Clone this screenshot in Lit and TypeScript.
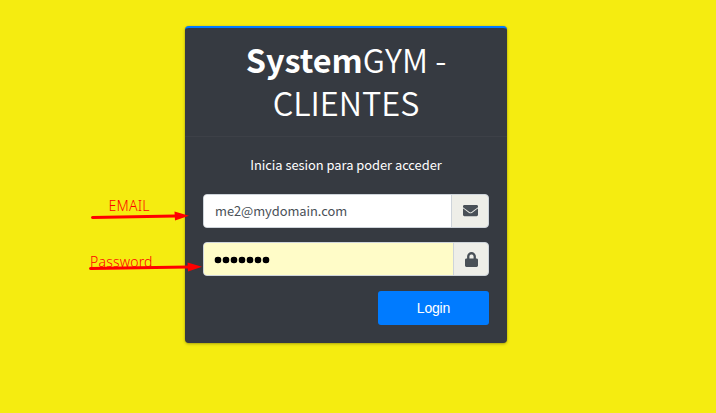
import { LitElement, html, css } from "lit";
import { customElement } from "lit/decorators.js";

@customElement("app-root")
export class AppRoot extends LitElement {
  static styles = css`
    :host {
      display: block;
      position: relative;
      box-sizing: border-box;
      width: 716px;
      height: 413px;
      padding: 26px 0 0 185px;
      overflow: hidden;
      background: #f5ec10;
      font-family: "Noto Sans CJK SC", "Noto Sans", sans-serif;
    }
    * { box-sizing: border-box; }
    .card {
      width: 322px;
      height: 317px;
      background: #363a41;
      border-top: 2px solid #007bff;
      border-radius: 4px;
      box-shadow: 0 0 1px rgba(0, 0, 0, 0.2), 0 1px 3px rgba(0, 0, 0, 0.3);
      color: #fff;
    }
    .header {
      height: 109px;
      padding-top: 9px;
      border-bottom: 1px solid #3d4047;
      text-align: center;
    }
    .title {
      margin: 0;
      font-size: 32.4px;
      line-height: 43px;
      font-weight: 350;
      white-space: nowrap;
    }
    .title b { font-weight: 700; }
    .line { display: block; }
    .body { padding: 17px 18px 0; }
    .message {
      margin: 0 0 19px;
      font-size: 12.9px;
      line-height: 21px;
      letter-spacing: -0.03px;
      text-align: center;
      white-space: nowrap;
    }
    .group {
      display: flex;
      height: 34px;
      margin-bottom: 14px;
      border: 1px solid #ced4da;
      border-radius: 4px;
      overflow: hidden;
      background: #eeeee8;
    }
    .field {
      flex: 1;
      min-width: 0;
      padding: 0 11px 2px;
      border: 0;
      outline: 0;
      background: #fff;
      color: #495057;
      font: 12.9px "Noto Sans CJK SC", sans-serif;
      letter-spacing: -0.05px;
    }
    .field.filled {
      padding: 2px 11px 0;
      background: #fffcc8;
      display: flex;
      align-items: center;
      gap: 2px;
    }
    .dot { width: 6px; height: 6px; border-radius: 50%; background: #000; box-shadow: 0 0 0 0.3px #000; }
    .addon {
      width: 37px;
      border-left: 1px solid #ced4da;
      display: flex;
      align-items: center;
      justify-content: center;
      color: #495057;
    }
    .addon svg { display: block; margin-top: -1px; }
    .addon.narrow { width: 35px; }
    .addon.narrow svg { margin-top: 1px; }
    .actions { display: flex; justify-content: flex-end; padding-top: 1px; }
    .login {
      width: 111px;
      height: 34px;
      padding: 0;
      border: 0;
      border-radius: 3px;
      background: #007bff;
      color: #fff;
      font: 14px "Liberation Sans", Arial, sans-serif;
      letter-spacing: -0.2px;
    }
    .notes { position: absolute; left: 0; top: 0; }
    .notes text { font-family: "Noto Sans", sans-serif; font-weight: 350; fill: #f00; }
  `;

  render() {
    return html`
      <div class="card">
        <div class="header">
          <h1 class="title"><span class="line"><b>System</b>GYM -</span><span class="line">CLIENTES</span></h1>
        </div>
        <div class="body">
          <p class="message">Inicia sesion para poder acceder</p>
          <div class="group">
            <input class="field" type="text" value="me2@mydomain.com" />
            <div class="addon">
              <svg width="15" height="15" viewBox="0 0 512 512" fill="currentColor">
                <path d="M502.3 190.8c3.9-3.1 9.7-.2 9.7 4.7V400c0 26.500-21.500 48-48 48H48c-26.500 0-48-21.500-48-48V195.600c0-5 5.700-7.800 9.700-4.700 22.400 17.400 52.100 39.500 154.100 113.600 21.100 15.400 56.700 47.800 92.200 47.600 35.700.3 72-32.800 92.300-47.600 102-74.100 131.600-96.300 154-113.700zM256 320c23.200.4 56.600-29.200 73.400-41.400 132.700-96.300 142.800-104.700 173.400-128.700 5.800-4.500 9.200-11.500 9.200-18.900v-19c0-26.500-21.500-48-48-48H48c-26.500 0-48 21.500-48 48v19c0 7.400 3.400 14.300 9.200 18.900 30.600 23.900 40.700 32.400 173.400 128.700 16.800 12.200 50.200 41.800 73.400 41.400z"/>
              </svg>
            </div>
          </div>
          <div class="group">
            <div class="field filled">${Array.from({ length: 7 }, () => html`<span class="dot"></span>`)}</div>
            <div class="addon narrow">
              <svg width="13" height="15" viewBox="0 0 448 512" fill="currentColor">
                <path d="M400 224h-24v-72C376 68.200 307.800 0 224 0S72 68.200 72 152v72H48c-26.500 0-48 21.500-48 48v192c0 26.500 21.500 48 48 48h352c26.500 0 48-21.500 48-48V272c0-26.500-21.500-48-48-48zm-104 0H152v-72c0-39.700 32.300-72 72-72s72 32.300 72 72v72z"/>
              </svg>
            </div>
          </div>
          <div class="actions"><button class="login">Login</button></div>
        </div>
      </div>
      <svg class="notes" width="716" height="413">
        <text x="108.500" y="211" font-size="14" textLength="41">EMAIL</text>
        <text x="90" y="267" font-size="14" textLength="62.500">Password</text>
        <g stroke="#f00" stroke-width="3" stroke-linecap="round" fill="#f00">
          <path d="M92.500 217.500L175 216M90.500 268.500L188 267"/>
          <path stroke="none" d="M174.500 211.500L189 215.700L175 220.500zM187.500 262.500L202 266.700L188 271.500z"/>
        </g>
      </svg>
    `;
  }
}
